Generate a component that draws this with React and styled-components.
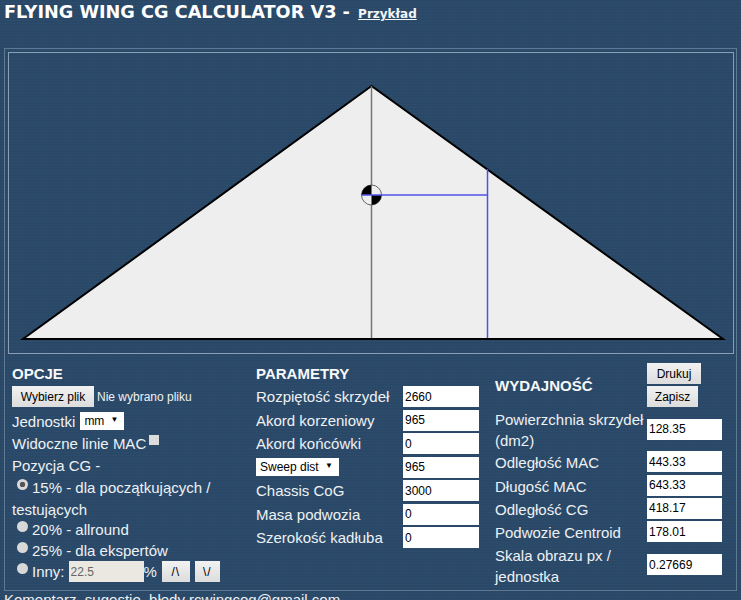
import React from "react";
import styled, { createGlobalStyle } from "styled-components";

const GlobalStyle = createGlobalStyle`
  html { overflow: hidden; }
  body {
    margin: 0;
    color: #eef1f4;
    font-family: "Liberation Sans", Arial, sans-serif;
    font-size: 15px;
    background-color: #2a4969;
    background-image:
      repeating-linear-gradient(0deg, rgba(255,255,255,0.02) 0 1px, transparent 1px 3px),
      repeating-linear-gradient(90deg, rgba(0,0,0,0.03) 0 1px, transparent 1px 3px);
  }
`;

const Title = styled.h1`
  margin: 0;
  padding-left: 4px;
  height: 48px;
  line-height: 24px;
  color: #fff;
  font-family: "DejaVu Sans", Verdana, sans-serif;
  font-size: 17.7px;
  font-weight: bold;
  a {
    color: #f2f4f6;
    font-size: 12px;
    text-decoration: underline;
    margin-left: 2px;
  }
`;

const Frame = styled.div`
  box-sizing: border-box;
  width: 733px;
  height: 543px;
  margin-left: 4px;
  padding: 3px;
  border: 1px solid #5f7894;
`;

const CanvasPanel = styled.div`
  width: 724px;
  border: 1px solid #8b9fb4;
  svg { display: block; }
`;

const Columns = styled.div`
  display: grid;
  grid-template-columns: 244px 239px 1fr;
  padding: 9px 0 0 4px;
`;

const Column = styled.div`
  display: flex;
  flex-direction: column;
`;

const Heading = styled.h2`
  margin: 0 0 ${(p) => p.$mb || 0}px;
  font-size: 15px;
  font-weight: bold;
  line-height: 21px;
  color: #f7f8f9;
`;

const Line = styled.div`
  display: flex;
  align-items: center;
  height: ${(p) => p.$h || 22}px;
  white-space: nowrap;
`;

const WrapLine = styled.div`
  line-height: 21px;
`;

const Button = styled.button`
  box-sizing: border-box;
  width: ${(p) => p.$w}px;
  height: 21px;
  margin: 0 0 0 ${(p) => p.$ml || 0}px;
  padding: 0;
  border: none;
  background: linear-gradient(#f2f2f2, #dcdcdc);
  color: #000;
  font-family: "Liberation Sans", Arial, sans-serif;
  font-size: 12px;
  letter-spacing: ${(p) => p.$ls || 0}px;
`;

const FileName = styled.span`
  margin-left: 3px;
  font-size: 12px;
`;

const SelectWrap = styled.span`
  position: relative;
  display: inline-flex;
  width: ${(p) => p.$w}px;
  margin-left: ${(p) => p.$ml || 0}px;
  &::after {
    content: "▼";
    position: absolute;
    right: 6px;
    top: 3px;
    font-size: 8px;
    color: #000;
    pointer-events: none;
  }
`;

const Select = styled.select`
  appearance: none;
  box-sizing: border-box;
  width: 100%;
  height: 18px;
  padding: 0 0 0 4px;
  border: none;
  border-radius: 0;
  background: #fff;
  color: #000;
  font-family: "Liberation Sans", Arial, sans-serif;
  font-size: 12px;
`;

const Checkbox = styled.input`
  appearance: none;
  width: 10px;
  height: 10px;
  margin: 0 0 8px 3px;
  background: #dcdcdc;
`;

const Radio = styled.input`
  appearance: none;
  box-sizing: border-box;
  width: 11px;
  height: 11px;
  margin: 0 4px 6px 5px;
  border-radius: 50%;
  background: ${(p) => (p.checked ? "radial-gradient(circle, #555 0 2.5px, #d8d8d8 3px)" : "#d8d8d8")};
`;

const NumberInput = styled.input`
  box-sizing: border-box;
  width: ${(p) => p.$w || 76}px;
  height: 21px;
  margin: 0;
  padding: 0 0 0 2px;
  border: none;
  background: #fff;
  color: #000;
  font-family: "Liberation Sans", Arial, sans-serif;
  font-size: 12px;
`;

const OtherInput = styled(NumberInput)`
  margin-left: 4px;
  background: #ebe8e2;
  color: #666;
`;

const ResultInput = styled(NumberInput)`
  margin-bottom: 2px;
`;

const ParamRow = styled.div`
  display: grid;
  grid-template-columns: 147px 76px;
  align-items: center;
  height: 23.5px;
  white-space: nowrap;
`;

const ResultRow = styled.div`
  display: grid;
  grid-template-columns: 152px 75px;
  align-items: center;
  min-height: 23.4px;
  line-height: 21px;
`;

const ResultHead = styled.div`
  display: grid;
  grid-template-columns: 152px auto;
  align-items: center;
  height: 44px;
  margin-bottom: 2px;
`;

const Actions = styled.div`
  display: flex;
  flex-direction: column;
  align-items: flex-start;
  gap: 2px;
`;

const Footer = styled.div`
  padding-left: 4px;
  line-height: 18px;
  color: #eef1f4;
`;

const params = [
  ["Rozpiętość skrzydeł", "2660"],
  ["Akord korzeniowy", "965"],
  ["Akord końcówki", "0"],
  ["sweep", "965"],
  ["Chassis CoG", "3000"],
  ["Masa podwozia", "0"],
  ["Szerokość kadłuba", "0"],
];

const results = [
  ["Powierzchnia skrzydeł (dm2)", "128.35"],
  ["Odległość MAC", "443.33"],
  ["Długość MAC", "643.33"],
  ["Odległość CG", "418.17"],
  ["Podwozie Centroid", "178.01"],
  ["Skala obrazu px / jednostka", "0.27669"],
];

function WingCanvas() {
  return (
    <svg width="724" height="300" viewBox="9 53 724 300">
      <polygon points="371.5,86 23,339 723,339" fill="#eeeeee" stroke="#000" strokeWidth="2" />
      <line x1="371.5" y1="86" x2="371.5" y2="338" stroke="#777" strokeWidth="1.5" />
      <line x1="487.5" y1="169" x2="487.5" y2="338" stroke="#5050ea" strokeWidth="1.5" />
      <circle cx="371.5" cy="195" r="10" fill="#eeeeee" stroke="#666" strokeWidth="1" />
      <path d="M371.5 195 V185 A10 10 0 0 0 361.5 195 Z" fill="#000" />
      <path d="M371.5 195 V205 A10 10 0 0 0 381.5 195 Z" fill="#000" />
      <line x1="362" y1="195" x2="487.5" y2="195" stroke="#5050ea" strokeWidth="1.5" />
    </svg>
  );
}

export default function App() {
  return (
    <>
      <GlobalStyle />
      <Title>
        FLYING WING CG CALCULATOR V3 - <a href="#example">Przykład</a>
      </Title>
      <Frame>
        <CanvasPanel>
          <WingCanvas />
        </CanvasPanel>
        <Columns>
          <Column>
            <Heading>OPCJE</Heading>
            <Line $h={25}>
              <Button $w={82}>Wybierz plik</Button>
              <FileName>Nie wybrano pliku</FileName>
            </Line>
            <Line $h={24}>
              Jednostki
              <SelectWrap $w={44} $ml={5}>
                <Select defaultValue="mm">
                  <option>mm</option>
                  <option>cm</option>
                </Select>
              </SelectWrap>
            </Line>
            <Line $h={21}>
              Widoczne linie MAC
              <Checkbox type="checkbox" />
            </Line>
            <Line>Pozycja CG -</Line>
            <Line $h={23}>
              <Radio type="radio" name="cg" defaultChecked checked readOnly />
              15% - dla początkujących /
            </Line>
            <Line $h={20}>testujących</Line>
            <Line $h={21}>
              <Radio type="radio" name="cg" readOnly />
              20% - allround
            </Line>
            <Line $h={20}>
              <Radio type="radio" name="cg" readOnly />
              25% - dla ekspertów
            </Line>
            <Line $h={23}>
              <Radio type="radio" name="cg" readOnly />
              Inny:
              <OtherInput $w={75} defaultValue="22.5" />
              %
              <Button $w={28} $ml={5} $ls={1}>/\</Button>
              <Button $w={25} $ml={5} $ls={1}>\/</Button>
            </Line>
          </Column>
          <Column>
            <Heading $mb={1}>PARAMETRY</Heading>
            {params.map(([label, value]) => (
              <ParamRow key={label}>
                {label === "sweep" ? (
                  <SelectWrap $w={83}>
                    <Select defaultValue="Sweep dist">
                      <option>Sweep dist</option>
                      <option>Sweep angle</option>
                    </Select>
                  </SelectWrap>
                ) : (
                  <span>{label}</span>
                )}
                <NumberInput defaultValue={value} />
              </ParamRow>
            ))}
          </Column>
          <Column>
            <ResultHead>
              <Heading>WYDAJNOŚĆ</Heading>
              <Actions>
                <Button $w={54}>Drukuj</Button>
                <Button $w={51}>Zapisz</Button>
              </Actions>
            </ResultHead>
            {results.map(([label, value]) => (
              <ResultRow key={label}>
                <WrapLine>{label}</WrapLine>
                <ResultInput $w={75} defaultValue={value} />
              </ResultRow>
            ))}
          </Column>
        </Columns>
      </Frame>
      <Footer>Komentarz, sugestie, błędy rcwingcog@gmail.com</Footer>
    </>
  );
}
